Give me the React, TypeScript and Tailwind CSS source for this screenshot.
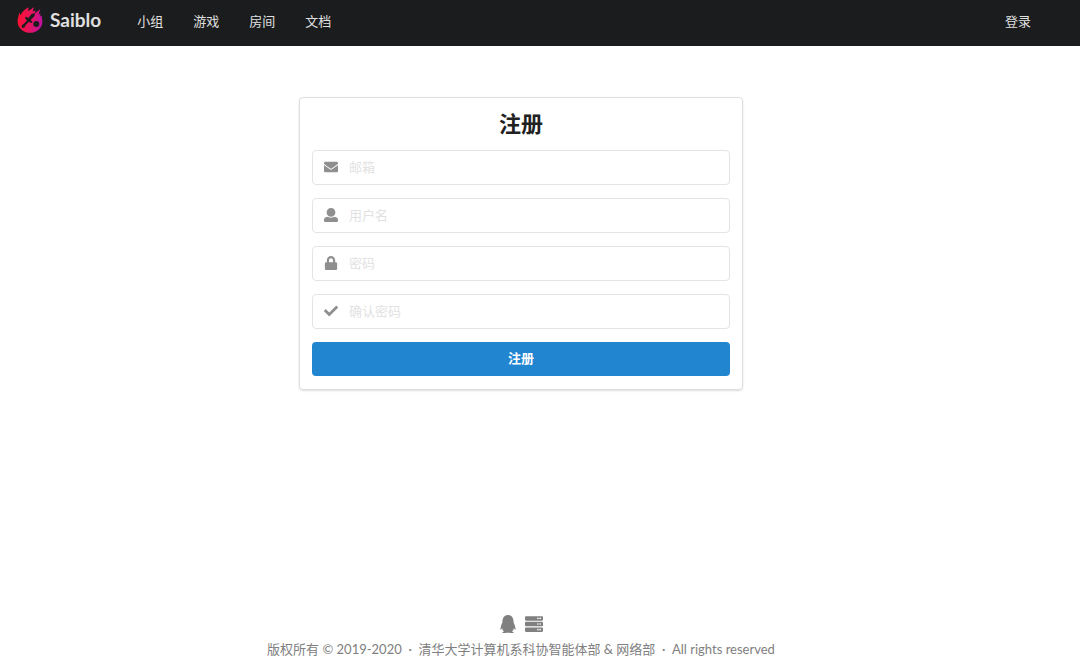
import type { FormEvent, ReactNode } from 'react'
import { FaCheck, FaEnvelope, FaLock, FaQq, FaServer } from 'react-icons/fa'

const navItems = ['小组', '游戏', '房间', '文档']

function Logo() {
  return (
    <svg viewBox="0 0 26 26" className="size-[26px]" aria-hidden="true">
      <defs>
        <linearGradient id="flame" x1="0" y1="0.4" x2="1" y2="0.6">
          <stop offset="0" stopColor="#ff1030" />
          <stop offset="0.5" stopColor="#e9145c" />
          <stop offset="1" stopColor="#bd12a4" />
        </linearGradient>
      </defs>
      <path
        fill="url(#flame)"
        d="M2.2 5.6 3.6 8.2C5 4.8 7.6 2.2 11.8.3L10.8 4C12.8 3.4 14.8 2 16.8.1L15.9 4.4 18.4 3.4 17.9 6.2 23.2 2.2 21.6 7.2 23.6 6.8 23.1 9.2 24.8 9C24.6 10.6 25.4 12 25.4 14.4A12.4 11.4 0 0 1 .6 14.4C.6 11 1.9 9 2.2 5.6Z"
      />
      <path
        fill="#1b1c1d"
        d="M18 5.9 17.4 9.2 13.6 13.1 15.5 15 14.3 16.1 11.9 14.7 8.7 18 7.4 20.5 4.9 21 4.7 18.3 6.8 17 10 13.4 7.9 10.9 9 9.7 11.3 11.1 14.6 6.9Z"
      />
      <circle cx="19.3" cy="17.1" r="3" fill="#1b1c1d" />
    </svg>
  )
}

function UserIcon() {
  return (
    <svg viewBox="0 0 512 512" fill="currentColor" className="size-[14px]">
      <path d="M256 0c88.366 0 160 71.634 160 160s-71.634 160-160 160S96 248.366 96 160 167.634 0 256 0zm183.283 333.821l-71.313-17.828c-74.923 53.89-165.738 41.864-223.94 0l-71.313 17.828C29.981 344.505 0 382.903 0 426.955V464c0 26.51 21.49 48 48 48h416c26.51 0 48-21.49 48-48v-37.045c0-44.052-29.981-82.45-72.717-93.134z" />
    </svg>
  )
}

interface FieldProps {
  name: string
  label: string
  type: string
  icon: ReactNode
}

function Field({ name, label, type, icon }: FieldProps) {
  return (
    <label className="flex h-[35px] items-center rounded border border-[#e4e4e5] bg-white pb-px focus-within:border-[#85b7d9]">
      <span className="flex w-9 shrink-0 justify-center text-[#8f8f8f]">{icon}</span>
      <input
        name={name}
        type={type}
        placeholder={label}
        aria-label={label}
        className="h-full w-full min-w-0 bg-transparent pr-3 text-[#191919] outline-none placeholder:text-[#e2e2e2]"
      />
    </label>
  )
}

export default function App() {
  const handleSubmit = (event: FormEvent) => {
    event.preventDefault()
  }

  return (
    <div className="flex min-h-screen flex-col bg-white font-['Lato','Noto_Sans_CJK_SC',sans-serif] text-[13px] leading-5">
      <header className="bg-[#1b1c1d] pr-[49px] pb-1 pl-[17px] text-[#e0e0e0]">
        <nav className="flex h-[42px] items-center">
          <a href="#" className="mr-9 flex items-center gap-[7px] pb-0.5">
            <Logo />
            <span className="text-[19px] font-bold">Saiblo</span>
          </a>
          <div className="flex gap-[30px]">
            {navItems.map((item) => (
              <a key={item} href="#" className="hover:text-white">
                {item}
              </a>
            ))}
          </div>
          <a href="#" className="ml-auto hover:text-white">
            登录
          </a>
        </nav>
      </header>

      <main className="flex-1 pt-[51px] pr-[38px]">
        <form
          onSubmit={handleSubmit}
          className="mx-auto flex max-w-[444px] flex-col gap-[13px] rounded border border-[#dededf] px-3 pt-3 pb-[13px] shadow-[0_1px_2px_rgba(34,36,38,0.15)]"
        >
          <h1 className="text-center text-[22px] leading-[27px] font-bold text-[#212121]">注册</h1>
          <Field name="email" label="邮箱" type="email" icon={<FaEnvelope size={14} />} />
          <Field name="username" label="用户名" type="text" icon={<UserIcon />} />
          <Field name="password" label="密码" type="password" icon={<FaLock size={14} />} />
          <Field name="confirm" label="确认密码" type="password" icon={<FaCheck size={14} />} />
          <button
            type="submit"
            className="h-[34px] cursor-pointer rounded bg-[#2185d0] pb-0.5 font-bold text-white hover:bg-[#1678c2]"
          >
            注册
          </button>
        </form>
      </main>

      <footer className="pr-[38px] pb-1.5 text-center text-[#808080]">
        <div className="mb-1.5 flex justify-center gap-2">
          <a href="#" aria-label="QQ">
            <FaQq size={18} />
          </a>
          <a href="#" aria-label="Server">
            <FaServer size={18} />
          </a>
        </div>
        <p className="whitespace-pre-wrap">
          版权所有 © 2019-2020&nbsp; ·&nbsp; 清华大学计算机系科协智能体部 &amp; 网络部&nbsp; ·&nbsp; All rights reserved
        </p>
      </footer>
    </div>
  )
}
